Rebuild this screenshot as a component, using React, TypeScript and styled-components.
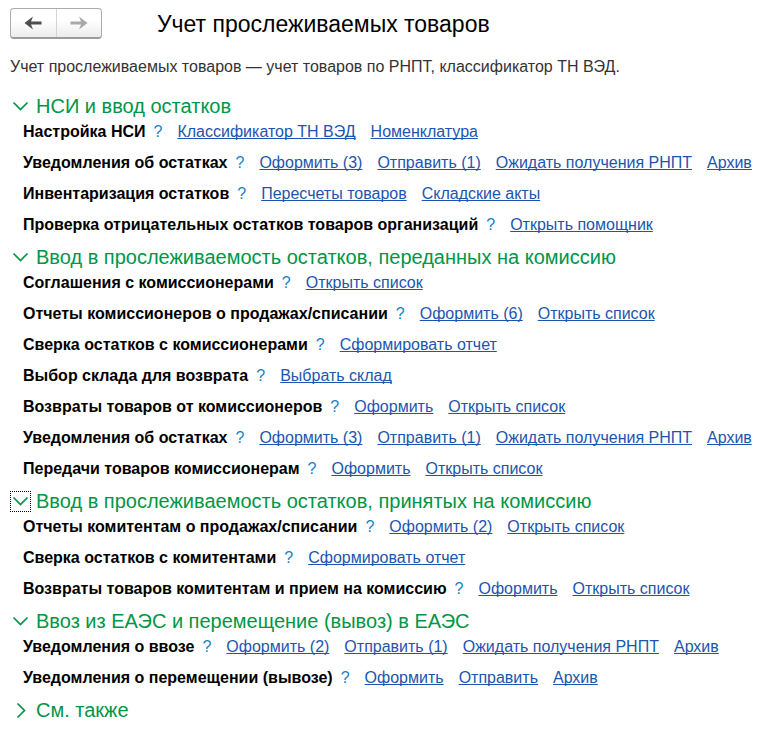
import React, { useState } from "react";
import styled, { createGlobalStyle } from "styled-components";

const GlobalStyle = createGlobalStyle`
  *, *::before, *::after { box-sizing: border-box; }
  body {
    margin: 0;
    background: #ffffff;
    color: #000000;
    font-family: "Liberation Sans", Arial, sans-serif;
    font-size: 16px;
    line-height: 19px;
  }
`;

const Page = styled.main`
  padding: 8px 10px;
`;

const Header = styled.header`
  display: flex;
  align-items: center;
  gap: 55px;
`;

const NavGroup = styled.nav`
  display: flex;
  flex: none;
  width: 92px;
  height: 31px;
  border: 1px solid #ababab;
  border-bottom: 2px solid #9c9c9c;
  border-radius: 4px;
  background: linear-gradient(#ffffff 0%, #ffffff 40%, #ececec 100%);
`;

const NavButton = styled.button`
  display: flex;
  flex: 1;
  align-items: center;
  justify-content: center;
  padding: 0;
  border: 0;
  background: none;
  color: #4d4d4d;

  & + & {
    border-left: 1px solid #d4d4d4;
  }

  &:disabled {
    color: #a8a8a8;
  }
`;

const Title = styled.h1`
  margin: 0;
  font-size: 23px;
  font-weight: 400;
  line-height: 30px;
`;

const Description = styled.p`
  margin: 18px 0 0;
  color: #333333;
`;

const Sections = styled.div`
  display: flex;
  flex-direction: column;
  gap: 11px;
  margin-top: 18px;
`;

const SectionHeader = styled.div`
  display: flex;
  align-items: center;
  gap: 5px;
`;

const Toggle = styled.button<{ $current: boolean }>`
  display: flex;
  flex: none;
  align-items: center;
  justify-content: center;
  width: 21px;
  height: 21px;
  padding: 0;
  border: 1px dotted ${({ $current }) => ($current ? "#000000" : "transparent")};
  outline: none;
  background: none;
  color: #009646;
  cursor: pointer;
`;

const SectionTitle = styled.h2`
  margin: 0;
  color: #009646;
  font-size: 20px;
  font-weight: 400;
  line-height: 25px;
`;

const Rows = styled.ul`
  display: flex;
  flex-direction: column;
  gap: 12px;
  margin: 3px 0 0;
  padding: 0 0 0 13px;
  list-style: none;
`;

const Row = styled.li`
  display: flex;
  gap: 15px;
  white-space: nowrap;
`;

const Label = styled.div`
  display: flex;
  gap: 8px;
  font-weight: 700;
`;

const HelpButton = styled.button`
  padding: 0;
  border: 0;
  background: none;
  color: #1a7fc4;
  font: inherit;
  font-weight: 400;
  cursor: pointer;
`;

const Command = styled.a`
  color: #1c55ae;
  text-decoration: underline;
  text-decoration-thickness: 1px;
  text-underline-offset: 1px;
  text-decoration-skip-ink: none;
`;

interface RowData {
  label: string;
  commands: string[];
}

interface SectionData {
  title: string;
  rows: RowData[];
}

const notices: RowData = {
  label: "Уведомления об остатках",
  commands: ["Оформить (3)", "Отправить (1)", "Ожидать получения РНПТ", "Архив"],
};

const sections: SectionData[] = [
  {
    title: "НСИ и ввод остатков",
    rows: [
      { label: "Настройка НСИ", commands: ["Классификатор ТН ВЭД", "Номенклатура"] },
      notices,
      { label: "Инвентаризация остатков", commands: ["Пересчеты товаров", "Складские акты"] },
      { label: "Проверка отрицательных остатков товаров организаций", commands: ["Открыть помощник"] },
    ],
  },
  {
    title: "Ввод в прослеживаемость остатков, переданных на комиссию",
    rows: [
      { label: "Соглашения с комиссионерами", commands: ["Открыть список"] },
      { label: "Отчеты комиссионеров о продажах/списании", commands: ["Оформить (6)", "Открыть список"] },
      { label: "Сверка остатков с комиссионерами", commands: ["Сформировать отчет"] },
      { label: "Выбор склада для возврата", commands: ["Выбрать склад"] },
      { label: "Возвраты товаров от комиссионеров", commands: ["Оформить", "Открыть список"] },
      notices,
      { label: "Передачи товаров комиссионерам", commands: ["Оформить", "Открыть список"] },
    ],
  },
  {
    title: "Ввод в прослеживаемость остатков, принятых на комиссию",
    rows: [
      { label: "Отчеты комитентам о продажах/списании", commands: ["Оформить (2)", "Открыть список"] },
      { label: "Сверка остатков с комитентами", commands: ["Сформировать отчет"] },
      { label: "Возвраты товаров комитентам и прием на комиссию", commands: ["Оформить", "Открыть список"] },
    ],
  },
  {
    title: "Ввоз из ЕАЭС и перемещение (вывоз) в ЕАЭС",
    rows: [
      {
        label: "Уведомления о ввозе",
        commands: ["Оформить (2)", "Отправить (1)", "Ожидать получения РНПТ", "Архив"],
      },
      { label: "Уведомления о перемещении (вывозе)", commands: ["Оформить", "Отправить", "Архив"] },
    ],
  },
  { title: "См. также", rows: [] },
];

function ArrowIcon({ forward = false }: { forward?: boolean }) {
  return (
    <svg width="18" height="14" viewBox="0 0 18 14" aria-hidden="true">
      <path
        d={
          forward
            ? "M0.5 5.5H11L9 0.5L17.5 7L9 13.5L11 8.5H0.5Z"
            : "M17.5 5.5H7L9 0.5L0.5 7L9 13.5L7 8.5H17.5Z"
        }
        fill="currentColor"
      />
    </svg>
  );
}

function Chevron({ open }: { open: boolean }) {
  return (
    <svg width="17" height="17" viewBox="0 0 17 17" aria-hidden="true">
      <path
        d={open ? "M1.5 4.5L8.5 11.5L15.5 4.5" : "M5.5 1.5L12.5 8.5L5.5 15.5"}
        fill="none"
        stroke="currentColor"
        strokeWidth="1.7"
      />
    </svg>
  );
}

export default function App() {
  const [open, setOpen] = useState(sections.map((section) => section.rows.length > 0));
  const [current, setCurrent] = useState(2);

  const toggle = (index: number) => {
    setCurrent(index);
    setOpen(open.map((value, i) => (i === index ? !value : value)));
  };

  return (
    <>
      <GlobalStyle />
      <Page>
        <Header>
          <NavGroup aria-label="История">
            <NavButton type="button" aria-label="Назад">
              <ArrowIcon />
            </NavButton>
            <NavButton type="button" aria-label="Вперед" disabled>
              <ArrowIcon forward />
            </NavButton>
          </NavGroup>
          <Title>Учет прослеживаемых товаров</Title>
        </Header>
        <Description>
          Учет прослеживаемых товаров — учет товаров по РНПТ, классификатор ТН ВЭД.
        </Description>
        <Sections>
          {sections.map((section, index) => (
            <section key={section.title} aria-labelledby={`section-${index}`}>
              <SectionHeader>
                <Toggle
                  type="button"
                  $current={index === current}
                  aria-expanded={open[index]}
                  aria-labelledby={`section-${index}`}
                  onClick={() => toggle(index)}
                >
                  <Chevron open={open[index]} />
                </Toggle>
                <SectionTitle id={`section-${index}`}>{section.title}</SectionTitle>
              </SectionHeader>
              {open[index] && section.rows.length > 0 && (
                <Rows>
                  {section.rows.map((row) => (
                    <Row key={row.label}>
                      <Label>
                        {row.label}
                        <HelpButton type="button" aria-label={`Справка: ${row.label}`}>
                          ?
                        </HelpButton>
                      </Label>
                      {row.commands.map((command) => (
                        <Command key={command} href="#">
                          {command}
                        </Command>
                      ))}
                    </Row>
                  ))}
                </Rows>
              )}
            </section>
          ))}
        </Sections>
      </Page>
    </>
  );
}
